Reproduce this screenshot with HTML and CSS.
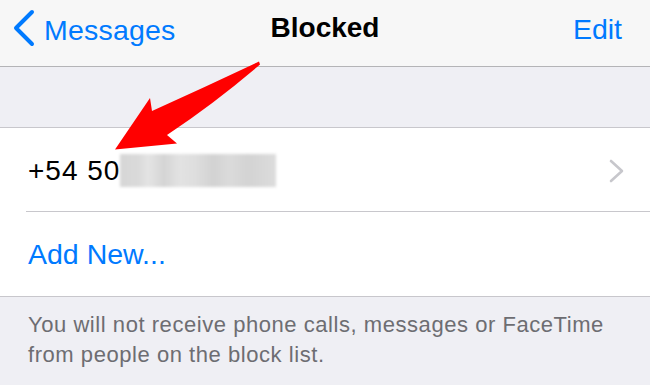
FILE: index.html
```html
<!DOCTYPE html>
<html>
<head>
<meta charset="utf-8">
<link rel="stylesheet" href="styles.css">
</head>
<body>
<div class="screen">
  <header class="nav">
    <div class="nav-left">
      <svg class="back-chevron" width="24" height="38" viewBox="0 0 24 38"><polyline points="20,3 4,19 20,35" fill="none" stroke="#007aff" stroke-width="4" stroke-linecap="round" stroke-linejoin="round"/></svg>
      <span class="nav-link">Messages</span>
    </div>
    <div class="nav-title">Blocked</div>
    <div class="nav-right"><span class="nav-link">Edit</span></div>
  </header>
  <div class="spacer"></div>
  <section class="list">
    <div class="row row-number">
      <span class="number">+54 50</span><span class="blurred"></span>
      <svg class="row-chevron" width="16" height="24" viewBox="0 0 16 24"><polyline points="2,2 13,12 2,22" fill="none" stroke="#c7c7cc" stroke-width="2.6" stroke-linecap="round" stroke-linejoin="round"/></svg>
    </div>
    <div class="separator"></div>
    <div class="row row-add"><span class="add-new">Add New...</span></div>
  </section>
  <footer class="footnote">You will not receive phone calls, messages or FaceTime from people on the block list.</footer>
  <svg class="arrow" width="650" height="385" viewBox="0 0 650 385"><path d="M259,61.5 Q205,87 152,111 L150,98 L115,149.5 L177,143.5 L167,135 Q215,103 260,64.5 Z" fill="#ff0000"/></svg>
</div>
</body>
</html>
```
FILE: styles.css
```css
html, body {
  margin: 0;
  padding: 0;
}
body {
  font-family: "Liberation Sans", Arial, sans-serif;
  background: #efeff4;
}
.screen {
  position: relative;
  width: 650px;
  height: 385px;
  overflow: hidden;
  background: #efeff4;
}
.nav {
  height: 66px;
  background: #f7f7f7;
  border-bottom: 1px solid #b4b4b7;
  display: flex;
  align-items: flex-start;
  justify-content: space-between;
  padding: 0 28px 0 12px;
  position: relative;
}
.nav-left {
  display: flex;
  align-items: flex-start;
  padding-top: 9px;
}
.back-chevron {
  display: block;
  margin-right: 8px;
}
.nav-link {
  color: #007aff;
  font-size: 28.5px;
  line-height: 34px;
  display: block;
}
.nav-left .nav-link {
  margin-top: 4px;
  letter-spacing: 0.2px;
}
.nav-title {
  position: absolute;
  left: 0;
  right: 0;
  top: 11px;
  text-align: center;
  font-weight: bold;
  font-size: 28px;
  line-height: 34px;
  color: #000;
  pointer-events: none;
}
.nav-right {
  padding-top: 12px;
}
.spacer {
  height: 60px;
  background: #efeff4;
  border-bottom: 1px solid #c8c7cc;
}
.list {
  background: #fff;
  border-bottom: 1px solid #c8c7cc;
}
.row {
  display: flex;
  align-items: center;
  padding: 0 26px 0 28px;
}
.row-number {
  height: 83px;
  padding-top: 3px;
  box-sizing: border-box;
}
.number {
  font-size: 28px;
  letter-spacing: 1px;
  color: #000;
}
.blurred {
  display: block;
  width: 156px;
  height: 33px;
  margin-top: -2px;
  background: linear-gradient(90deg, #d6d6d6 0%, #dadada 12%, #e4e4e4 18%, #d4d4d4 28%, #e2e2e2 38%, #dedede 48%, #d2d2d2 60%, #dbdbdb 70%, #d3d3d3 82%, #dcdcdc 100%);
  filter: blur(1.5px);
}
.row-chevron {
  margin-left: auto;
  display: block;
  margin-right: -1px;
}
.separator {
  height: 1px;
  margin-left: 26px;
  background: #c8c7cc;
}
.row-add {
  height: 84px;
}
.add-new {
  font-size: 28.5px;
  color: #007aff;
}
.footnote {
  padding: 13px 30px 0 28px;
  font-size: 22px;
  line-height: 30px;
  letter-spacing: 0.55px;
  color: #6d6d72;
}
.arrow {
  position: absolute;
  left: 0;
  top: 0;
  pointer-events: none;
}
```
